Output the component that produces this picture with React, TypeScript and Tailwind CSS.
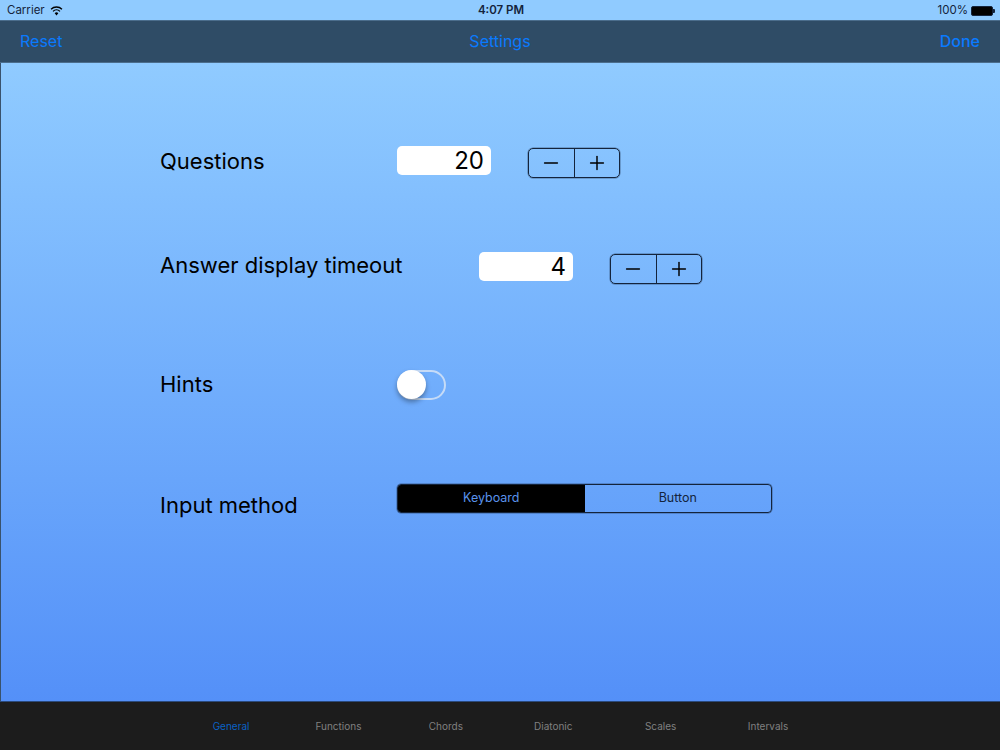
import { Minus, Plus } from "lucide-react";

const tabs = ["General", "Functions", "Chords", "Diatonic", "Scales", "Intervals"];

function NumberRow({ label, value, labelClass }: { label: string; value: string; labelClass: string }) {
  return (
    <div className="flex items-start">
      <div className={`${labelClass} text-[22px] leading-[30px] text-black`}>{label}</div>
      <div className="w-[94px] h-[29px] bg-white rounded-[5px] text-right pr-[7px] text-[24px] leading-[30px] text-black">
        {value}
      </div>
      <div className="ml-[37px] mt-[2px] w-[92px] h-[30px] flex border border-[#14243c] rounded-[5px] shadow-[0_0_0_0.5px_rgba(20,36,60,0.5)]">
        <div className="flex-1 flex items-center justify-center border-r border-[#14243c]">
          <Minus size={22} strokeWidth={1.6} color="#000" />
        </div>
        <div className="flex-1 flex items-center justify-center">
          <Plus size={22} strokeWidth={1.6} color="#000" />
        </div>
      </div>
    </div>
  );
}

export default function App() {
  return (
    <div className="w-[1000px] h-[750px] flex flex-col overflow-hidden font-['Inter',sans-serif]">
      <div className="h-5 shrink-0 bg-[#90cbff] flex items-center justify-between pl-[7px] pr-[5px] pt-px text-[11.5px] text-[#14243c]">
        <div className="flex-1 flex items-center gap-[5px]">
          <span>Carrier</span>
          <svg width="13" height="10" viewBox="0 0 14 11">
            <path d="M1 3.6a8.6 8.6 0 0 1 12 0" fill="none" stroke="#000" strokeWidth="1.5" />
            <path d="M3.2 5.9a5.4 5.4 0 0 1 7.6 0" fill="none" stroke="#000" strokeWidth="1.5" />
            <path d="M5 8a2.8 2.8 0 0 1 4 0L7 10.4z" fill="#000" />
          </svg>
        </div>
        <span className="font-semibold">4:07 PM</span>
        <div className="flex-1 flex items-center justify-end gap-[3px]">
          <span>100%</span>
          <div className="flex items-center">
            <div className="w-[22px] h-[10px] bg-black border border-[#14243c] rounded-[2px]" />
            <div className="w-[2px] h-[4px] bg-[#14243c] rounded-r-[1px]" />
          </div>
        </div>
      </div>

      <div className="h-[43px] shrink-0 bg-[#2f4c66] border-y border-[#4b6d8c] flex items-center justify-between pl-5 pr-5 pb-[2px] text-[16px] text-[#0a7afe]">
        <span className="w-20">Reset</span>
        <span>Settings</span>
        <span className="w-20 text-right font-medium">Done</span>
      </div>

      <div className="flex-1 bg-gradient-to-b from-[#90cbff] to-[#5490f8] pl-[159px] pt-[83px] border-l border-[#39526c]">
        <NumberRow label="Questions" value="20" labelClass="w-[237px]" />
        <div className="mt-[74px]">
          <NumberRow label="Answer display timeout" value="4" labelClass="w-[319px] -mt-[2px]" />
        </div>
        <div className="mt-[86px] flex items-center">
          <div className="w-[237px] text-[22px] leading-[30px] -mt-[2px] text-black">Hints</div>
          <div className="relative w-[49px] h-[30px] rounded-full border-2 border-[#dbe6f5]/80">
            <div className="absolute -left-[2px] -top-[2px] w-[29px] h-[29px] rounded-full bg-white shadow-[0_3px_5px_rgba(0,0,0,0.35)]" />
          </div>
        </div>
        <div className="mt-[84px] flex items-start">
          <div className="w-[237px] text-[22px] leading-[30px] mt-[6px] text-black">Input method</div>
          <div className="w-[375px] h-[29px] flex border border-[#14243c] rounded-[4px] shadow-[0_0_0_0.5px_rgba(20,36,60,0.5)] overflow-hidden text-[12.5px]">
            <div className="flex-1 bg-black text-[#5a93ea] flex items-center justify-center">Keyboard</div>
            <div className="flex-1 text-[#14243c] flex items-center justify-center">Button</div>
          </div>
        </div>
      </div>

      <div className="h-[49px] shrink-0 bg-[#1c1c1c] border-t border-[#2b4a7c] pl-[177.4px] flex items-center text-[10px] text-[#808080]">
        {tabs.map((t, i) => (
          <div key={t} className={`w-[107.4px] text-center ${i === 0 ? "text-[#0a62c4]" : ""}`}>
            {t}
          </div>
        ))}
      </div>
    </div>
  );
}
